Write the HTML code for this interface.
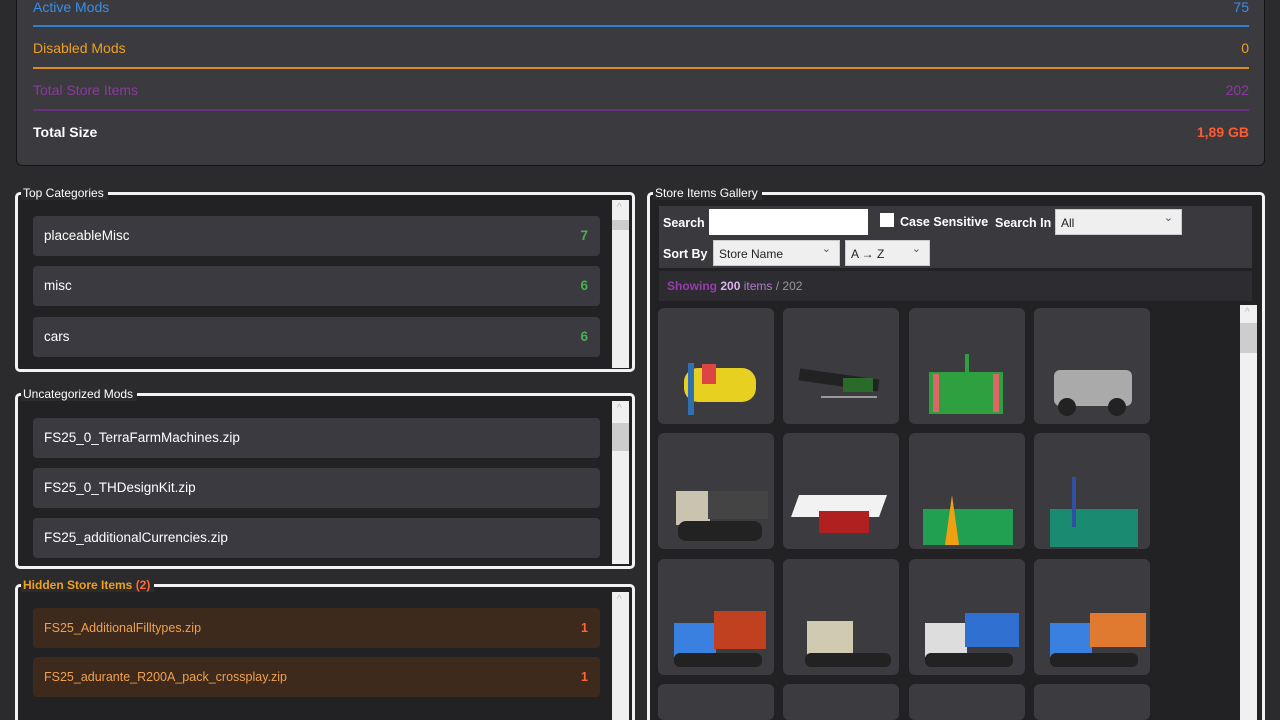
<!DOCTYPE html>
<html style="height:720px;overflow:hidden"><head><meta charset="utf-8"><style>
*{box-sizing:border-box;margin:0;padding:0}
body{width:1280px;height:720px;overflow:hidden;background:#2b2b2e;font-family:"Liberation Sans",sans-serif;font-size:14px;color:#fff;position:relative}
.a{position:absolute}
.top{left:16px;top:-10px;width:1249px;height:176px;background:#3b3a3f;border:1px solid #141414;border-radius:0 0 6px 6px}
.st{left:16px;width:1216px;font-size:14px}
.st span{position:absolute;right:0}
.ln{left:16px;width:1216px;height:2px}
.fs{border:3px solid #f2f2f2;border-radius:5px;background:#222224}
.lg{font-size:12px;background:#2b2b2e;padding:0 4px 0 2px;top:-9px;left:3px;color:#fff}
.row{left:15px;width:567px;height:40px;background:#3b3a40;border-radius:4px;font-size:13.5px;line-height:40px;padding-left:11px}
.row b{position:absolute;right:12px;color:#4caf50}
.hr{background:#3d2a1d;color:#f0a050;font-size:12.5px}
.hr b{color:#ff6633}
.sb{width:17px;background:#f0f0f0}
.sb:before{content:"^";position:absolute;top:2px;left:5px;color:#bbb;font-size:10px}
.th{left:0;width:17px;background:#cdcdcd}
.tile{width:116px;height:116px;background:#3c3b40;border-radius:6px;overflow:hidden}
.sel{background:#efefef;color:#222;font-size:12px;height:26px;line-height:26px;padding-left:5px;border:1px solid #ccc}
.sel:after{content:"\2304";position:absolute;right:8px;top:-5px;font-size:11px;color:#555}
.lb{font-weight:bold;font-size:12.5px}
</style></head><body>
<div class="a top">
<div class="a st" style="top:8px;color:#3a8fe8">Active Mods<span>75</span></div>
<div class="a ln" style="top:34px;background:#2f7fd0"></div>
<div class="a st" style="top:49px;color:#f0a020">Disabled Mods<span>0</span></div>
<div class="a ln" style="top:76px;background:#e08a1a"></div>
<div class="a st" style="top:91px;color:#8a3a9e">Total Store Items<span>202</span></div>
<div class="a ln" style="top:118px;background:#6a2f80"></div>
<div class="a st" style="top:133px;font-weight:bold">Total Size<span style="color:#ff5a30">1,89 GB</span></div>
</div>

<div class="a fs" style="left:15px;top:192px;width:620px;height:180px">
<div class="a lg">Top Categories</div>
<div class="a row" style="top:21px">placeableMisc<b>7</b></div>
<div class="a row" style="top:71px">misc<b>6</b></div>
<div class="a row" style="top:122px">cars<b>6</b></div>
<div class="a sb" style="left:594px;top:5px;height:168px"><div class="a th" style="top:20px;height:10px"></div></div>
</div>

<div class="a fs" style="left:15px;top:393px;width:620px;height:176px">
<div class="a lg">Uncategorized Mods</div>
<div class="a row" style="top:22px">FS25_0_TerraFarmMachines.zip</div>
<div class="a row" style="top:72px">FS25_0_THDesignKit.zip</div>
<div class="a row" style="top:122px">FS25_additionalCurrencies.zip</div>
<div class="a sb" style="left:594px;top:5px;height:163px"><div class="a th" style="top:22px;height:28px"></div></div>
</div>

<div class="a fs" style="left:15px;top:584px;width:620px;height:150px">
<div class="a lg" style="color:#f0a020;font-weight:bold">Hidden Store Items <span style="color:#ff6633">(2)</span></div>
<div class="a row hr" style="top:21px">FS25_AdditionalFilltypes.zip<b>1</b></div>
<div class="a row hr" style="top:70px">FS25_adurante_R200A_pack_crossplay.zip<b>1</b></div>
<div class="a sb" style="left:594px;top:5px;height:140px"></div>
</div>

<div class="a fs" style="left:647px;top:192px;width:618px;height:545px">
<div class="a lg">Store Items Gallery</div>
<div class="a" style="left:9px;top:11px;width:593px;height:62px;background:#3a393e"></div>
<div class="a lb" style="left:13px;top:21px">Search</div>
<div class="a" style="left:59px;top:14px;width:159px;height:26px;background:#fff"></div>
<div class="a" style="left:230px;top:18px;width:14px;height:14px;background:#fff"></div>
<div class="a lb" style="left:250px;top:20px">Case Sensitive</div>
<div class="a lb" style="left:345px;top:21px">Search In</div>
<div class="a sel" style="left:405px;top:14px;width:127px">All</div>
<div class="a lb" style="left:13px;top:52px">Sort By</div>
<div class="a sel" style="left:63px;top:45px;width:127px">Store Name</div>
<div class="a sel" style="left:195px;top:45px;width:85px">A → Z</div>
<div class="a" style="left:9px;top:76px;width:593px;height:30px;background:#2d2c31;font-size:12px;line-height:30px;padding-left:8px"><b style="color:#9a3ab0">Showing</b> <b style="color:#d9b3f0">200</b> <span style="color:#b07ad0">items</span> <span style="color:#999">/ 202</span></div>
<div class="a sb" style="left:590px;top:110px;height:440px"><div class="a th" style="top:18px;height:30px"></div></div>
</div>

<div class="a tile" style="left:658px;top:308px"><div class="a" style="left:26px;top:60px;width:72px;height:34px;background:#e8d020;border-radius:14px"></div><div class="a" style="left:30px;top:55px;width:6px;height:52px;background:#3070b0"></div><div class="a" style="left:44px;top:56px;width:14px;height:20px;background:#d44"></div></div>
<div class="a tile" style="left:783px;top:308px"><div class="a" style="left:16px;top:66px;width:80px;height:12px;background:#222;transform:rotate(8deg)"></div><div class="a" style="left:60px;top:70px;width:30px;height:14px;background:#2a6a2a"></div><div class="a" style="left:38px;top:88px;width:56px;height:2px;background:#999"></div></div>
<div class="a tile" style="left:909px;top:308px"><div class="a" style="left:20px;top:64px;width:74px;height:42px;background:#2ea040"></div><div class="a" style="left:24px;top:66px;width:6px;height:38px;background:#d66"></div><div class="a" style="left:84px;top:66px;width:6px;height:38px;background:#d66"></div><div class="a" style="left:56px;top:46px;width:4px;height:20px;background:#2ea040"></div></div>
<div class="a tile" style="left:1034px;top:308px"><div class="a" style="left:20px;top:62px;width:78px;height:36px;background:#aaa;border-radius:6px"></div><div class="a" style="left:24px;top:90px;width:18px;height:18px;background:#222;border-radius:50%"></div><div class="a" style="left:74px;top:90px;width:18px;height:18px;background:#222;border-radius:50%"></div></div>

<div class="a tile" style="left:658px;top:433px"><div class="a" style="left:18px;top:58px;width:34px;height:34px;background:#c8c4b0"></div><div class="a" style="left:50px;top:58px;width:60px;height:28px;background:#444"></div><div class="a" style="left:20px;top:88px;width:84px;height:20px;background:#222;border-radius:8px"></div></div>
<div class="a tile" style="left:783px;top:433px"><div class="a" style="left:12px;top:62px;width:88px;height:22px;background:#f2f2f2;transform:skewX(-20deg)"></div><div class="a" style="left:36px;top:78px;width:50px;height:22px;background:#b02020"></div></div>
<div class="a tile" style="left:909px;top:433px"><div class="a" style="left:14px;top:76px;width:90px;height:36px;background:#20a050"></div><div class="a" style="left:36px;top:62px;width:14px;height:50px;background:#f0a010;clip-path:polygon(50% 0,100% 100%,0 100%)"></div></div>
<div class="a tile" style="left:1034px;top:433px"><div class="a" style="left:16px;top:76px;width:88px;height:38px;background:#1a8a70"></div><div class="a" style="left:38px;top:44px;width:4px;height:50px;background:#3050a0"></div></div>

<div class="a tile" style="left:658px;top:559px"><div class="a" style="left:16px;top:64px;width:42px;height:34px;background:#3a80e0"></div><div class="a" style="left:56px;top:52px;width:52px;height:38px;background:#c04020"></div><div class="a" style="left:16px;top:94px;width:88px;height:14px;background:#222;border-radius:6px"></div></div>
<div class="a tile" style="left:783px;top:559px"><div class="a" style="left:24px;top:62px;width:46px;height:36px;background:#cfcab0"></div><div class="a" style="left:22px;top:94px;width:86px;height:14px;background:#222;border-radius:6px"></div></div>
<div class="a tile" style="left:909px;top:559px"><div class="a" style="left:16px;top:64px;width:42px;height:34px;background:#ddd"></div><div class="a" style="left:56px;top:54px;width:54px;height:34px;background:#3070d0"></div><div class="a" style="left:16px;top:94px;width:88px;height:14px;background:#222;border-radius:6px"></div></div>
<div class="a tile" style="left:1034px;top:559px"><div class="a" style="left:16px;top:64px;width:42px;height:34px;background:#3a80e0"></div><div class="a" style="left:56px;top:54px;width:56px;height:34px;background:#e07a30"></div><div class="a" style="left:16px;top:94px;width:88px;height:14px;background:#222;border-radius:6px"></div></div>

<div class="a tile" style="left:658px;top:684px;height:36px"></div>
<div class="a tile" style="left:783px;top:684px;height:36px"></div>
<div class="a tile" style="left:909px;top:684px;height:36px"></div>
<div class="a tile" style="left:1034px;top:684px;height:36px"></div>
</body></html>
